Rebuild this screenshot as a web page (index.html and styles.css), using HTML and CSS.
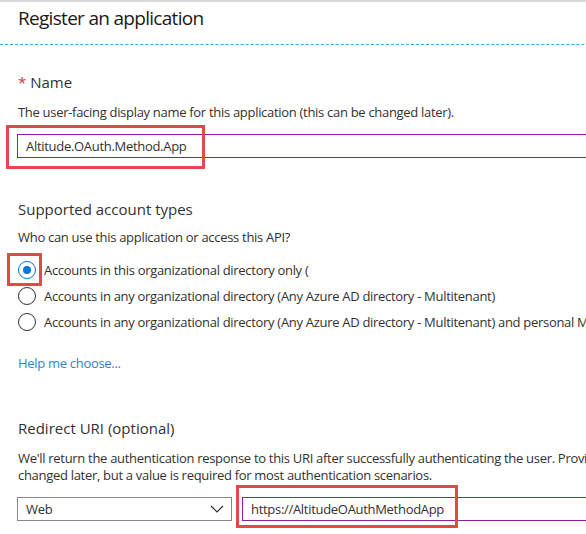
FILE: index.html
```html
<!DOCTYPE html>
<html lang="en">
<head>
<meta charset="utf-8">
<title>Register an application</title>
<link rel="stylesheet" href="styles.css">
</head>
<body>
<div class="page">
  <header class="blade-header">
    <h1 class="blade-title">Register an application</h1>
  </header>
  <main class="form">
    <section class="section section-name">
      <h2 class="section-title"><span class="req">*</span> Name</h2>
      <p class="desc">The user-facing display name for this application (this can be changed later).</p>
      <div class="field">
        <input class="textbox textbox-focus" type="text" value="Altitude.OAuth.Method.App">
        <span class="callout callout-name"></span>
      </div>
    </section>

    <section class="section section-accounts">
      <h2 class="section-title">Supported account types</h2>
      <p class="desc">Who can use this application or access this API?</p>
      <ul class="radios">
        <li class="radio-row">
          <span class="radio-wrap"><span class="radio radio-checked"></span><span class="callout callout-radio"></span></span>
          <span class="radio-label">Accounts in this organizational directory only (<span class="redacted"></span></span>
        </li>
        <li class="radio-row">
          <span class="radio-wrap"><span class="radio"></span></span>
          <span class="radio-label">Accounts in any organizational directory (Any Azure AD directory - Multitenant)</span>
        </li>
        <li class="radio-row">
          <span class="radio-wrap"><span class="radio"></span></span>
          <span class="radio-label">Accounts in any organizational directory (Any Azure AD directory - Multitenant) and personal Microsoft accounts</span>
        </li>
      </ul>
      <a class="help-link" href="#">Help me choose...</a>
    </section>

    <section class="section section-redirect">
      <h2 class="section-title">Redirect URI (optional)</h2>
      <p class="desc desc-two">We'll return the authentication response to this URI after successfully authenticating the user. Providing this now is optional and it can be<br>changed later, but a value is required for most authentication scenarios.</p>
      <div class="uri-row">
        <div class="select">
          <span class="select-value">Web</span>
          <svg class="chevron" width="14" height="8" viewBox="0 0 14 8"><path d="M1 1 L7 7 L13 1" fill="none" stroke="#323130" stroke-width="1.2"/></svg>
        </div>
        <div class="field field-uri">
          <input class="textbox textbox-focus" type="text" value="https://AltitudeOAuthMethodApp">
          <span class="callout callout-uri"></span>
        </div>
      </div>
    </section>
  </main>
</div>
</body>
</html>
```

FILE: styles.css
```css
* { box-sizing: border-box; }

html, body {
  margin: 0;
  padding: 0;
  background: #ffffff;
  overflow: hidden;
}

body {
  font-family: "Open Sans", "Noto Sans", sans-serif;
  color: #323130;
  width: 586px;
  height: 534px;
}

.page {
  width: 820px;
  border-top: 2px solid #d9d9d9;
}

.blade-header {
  height: 43px;
  border-bottom: 1px dashed #3aa6dc;
  padding-left: 18px;
}

.blade-title {
  margin: 0;
  padding-top: 3px;
  font-size: 19px;
  font-weight: 400;
  line-height: 26px;
  letter-spacing: -0.7px;
  color: #1b1a19;
}

.form {
  padding-left: 17px;
}

.section-title {
  margin: 0;
  font-size: 15px;
  font-weight: 400;
  line-height: 20px;
  letter-spacing: 0;
  padding-left: 1px;
}

.req {
  color: #d13438;
}

.desc {
  margin: 0;
  font-size: 13px;
  line-height: 17px;
  letter-spacing: -0.3px;
  padding-left: 1px;
}

.section-name { padding-top: 27px; }
.section-name .desc { margin-top: 12px; }
.section-name .field { margin-top: 13px; }

.field {
  position: relative;
}

.textbox {
  display: block;
  width: 800px;
  height: 24px;
  margin: 0;
  padding: 0 8px;
  border: 1px solid #8a1fa0;
  border-radius: 0;
  font-family: inherit;
  font-size: 13px;
  letter-spacing: -0.3px;
  color: #323130;
  background: #fff;
  outline: none;
}

.callout {
  position: absolute;
  border: 3px solid #e5484b;
  pointer-events: none;
}

.callout-name {
  left: -11px;
  top: -9px;
  width: 199px;
  height: 44px;
}

.section-accounts { padding-top: 41px; }
.section-accounts .desc { margin-top: 10px; }

.radios {
  list-style: none;
  margin: 15px 0 0;
  padding: 0;
  display: flex;
  flex-direction: column;
  gap: 8px;
}

.radio-row {
  display: flex;
  align-items: center;
  gap: 8px;
  height: 18px;
  font-size: 13px;
  letter-spacing: -0.3px;
  white-space: nowrap;
}

.radio-wrap {
  position: relative;
  width: 18px;
  height: 18px;
  flex: none;
  margin-left: 1px;
}

.radio {
  display: block;
  width: 18px;
  height: 18px;
  border: 1px solid #323130;
  border-radius: 50%;
  background: #fff;
  position: relative;
}

.radio-checked {
  border-color: #0078d4;
}

.radio-checked::after {
  content: "";
  position: absolute;
  left: 4px;
  top: 4px;
  width: 8px;
  height: 8px;
  border-radius: 50%;
  background: #0078d4;
}

.callout-radio {
  left: -11px;
  top: -8px;
  width: 35px;
  height: 33px;
}

.redacted {
  display: inline-block;
  width: 260px;
}

.help-link {
  display: inline-block;
  margin-top: 24px;
  padding-left: 1px;
  font-size: 13px;
  letter-spacing: -0.3px;
  color: #2f7fd6;
  text-decoration: none;
  line-height: 17px;
}

.section-redirect { padding-top: 45px; }
.section-redirect .desc { margin-top: 12px; line-height: 17px; }

.uri-row {
  margin-top: 13px;
  display: flex;
  gap: 10px;
  align-items: flex-start;
}

.select {
  flex: none;
  width: 215px;
  height: 24px;
  border: 1px solid #8a8886;
  display: flex;
  align-items: center;
  justify-content: space-between;
  padding: 0 7px 0 8px;
  font-size: 13px;
  letter-spacing: -0.3px;
}

.chevron { display: block; }

.field-uri {
  flex: 1;
}

.callout-uri {
  left: -6px;
  top: -12px;
  width: 222px;
  height: 43px;
}
```
